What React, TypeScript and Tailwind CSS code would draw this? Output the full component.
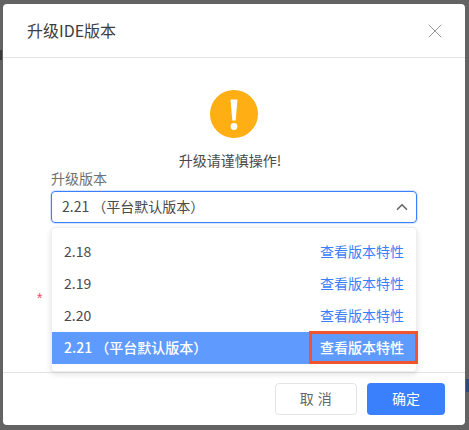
import React from 'react';
import { ChevronUp, X } from 'lucide-react';

const versions = ['2.18', '2.19', '2.20'];
const font = "font-['Noto_Sans_CJK_SC','Noto_Sans',sans-serif]";

function VersionMenu() {
  return (
    <div className="absolute left-[51px] top-[227px] w-[366px] h-[145px] bg-white rounded-[4px] border border-[#eeeeee] shadow-[0_2px_6px_rgba(0,0,0,0.12)] pt-[8px]">
      {versions.map((v) => (
        <div key={v} className="h-[32px] flex items-center justify-between pl-[12px] pr-[12px] pb-[2px] text-[14px] text-[#4a4a4a]">
          <span>{v}</span>
          <span className="text-[#3a7ffb]">查看版本特性</span>
        </div>
      ))}
      <div className="h-[32px] flex items-center justify-between pl-[12px] pr-[12px] pb-[2px] text-[14px] text-white bg-[#5f9bff] font-medium">
        <span>2.21 （平台默认版本）</span>
        <span>查看版本特性</span>
      </div>
      <div className="absolute left-[257px] top-[103px] w-[109px] h-[33px] border-[3px] border-[#f0552f]" />
    </div>
  );
}

export default function App() {
  return (
    <div className={`${font} relative w-[469px] h-[430px] bg-[#636363] overflow-hidden pt-[4px] pl-[3px]`}>
      {/* page behind the mask, only slivers show */}
      <div className="absolute left-0 top-[50px] w-[2px] h-[10px] bg-[#3a3a3a]" />
      <div className="absolute left-[466px] top-[379px] w-[3px] h-[13px] bg-[#2b4a80]" />
      <div className="relative w-[462px] h-[421px] bg-white rounded-[4px] flex flex-col">
        <div className="h-[54px] flex items-center justify-between pl-[24px] pr-[18px] border-b border-[#e4e4e4] shrink-0">
          <span className="text-[16px] text-[#3d3d3d] pb-[2px]">升级IDE版本</span>
          <X size={24} strokeWidth={1} className="text-[#999999]" />
        </div>
        <div className="flex-1 flex flex-col items-center pt-[32px] relative">
          <svg width="48" height="48" viewBox="0 0 48 48">
            <circle cx="24" cy="24" r="24" fill="#ffae13" />
            <path d="M20.5 9.5h7l-1.8 21h-3.4z" fill="#fff" />
            <circle cx="24" cy="36.5" r="3.4" fill="#fff" />
          </svg>
          <div className="mt-[14px] mr-[8px] text-[14px] leading-[17px] text-[#4a4a4a]">升级请谨慎操作!</div>
          <div className="self-start ml-[48px] text-[14px] leading-[18px] text-[#707070]">升级版本</div>
          <div className="self-start ml-[48px] mt-[4px] w-[366px] h-[32px] rounded-[4px] border border-[#3a7ffb] shadow-[0_0_0_1px_rgba(58,127,251,0.2)] flex items-center justify-between pl-[10px] pr-[5px] text-[14px] text-[#4a4a4a]">
            <span className="pb-[2px]">2.21 （平台默认版本）</span>
            <ChevronUp size={18} strokeWidth={2.2} className="text-[#666666]" />
          </div>
          <span className="absolute left-[34px] top-[233px] font-['Liberation_Sans',sans-serif] text-[14px] leading-none text-[#f5475b]">*</span>
        </div>
        <div className="h-[53px] border-t border-[#e4e4e4] flex items-center justify-end gap-[10px] pr-[20px] shrink-0">
          <button className="w-[82px] h-[32px] rounded-[4px] border border-[#e3e3e3] bg-white pb-[2px] text-[14px] tracking-[0.5px] text-[#666666]">取 消</button>
          <button className="w-[78px] h-[32px] rounded-[4px] bg-[#3a7ffb] pb-[2px] text-[14px] text-white">确定</button>
        </div>
      </div>
      <VersionMenu />
    </div>
  );
}
